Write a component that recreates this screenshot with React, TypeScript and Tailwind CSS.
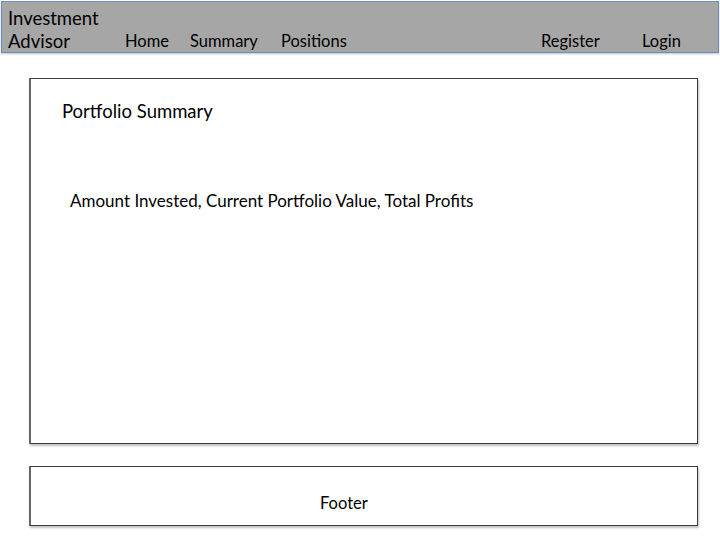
export default function App() {
  const font = { fontFamily: "Lato, 'Open Sans', sans-serif" };
  return (
    <div className="w-[720px] h-[540px] bg-white text-black relative" style={font}>
      <div className="mx-px mt-px h-[52px] bg-[#a6a6a6] border border-[#6c8ebf] flex items-end shadow-[0_1px_2px_rgba(0,0,0,0.25)]">
        <div className="pl-[6px] w-[123px] text-[18.5px] leading-[23px] mb-[-1px]">
          Investment
          <br />
          Advisor
        </div>
        <nav className="flex flex-1 text-[16.5px] leading-[23px] mb-[-1px]">
          <span className="w-[65px]">Home</span>
          <span className="w-[91px]">Summary</span>
          <span>Positions</span>
          <span className="ml-auto w-[101px]">Register</span>
          <span className="w-[76px]">Login</span>
        </nav>
      </div>
      <div className="pl-[29px] pr-[22px] pt-[25px] flex flex-col gap-[22px]">
        <div className="h-[366px] border border-[#3a3a3a] border-l-2 border-l-[#666] shadow-[1px_2px_2px_rgba(0,0,0,0.25)] pl-[31px] pt-[20px]">
          <div className="text-[18.5px] leading-[24px]">Portfolio Summary</div>
          <div className="pl-[8px] mt-[67px] text-[17px] leading-[22px]">
            Amount Invested, Current Portfolio Value, Total Profits
          </div>
        </div>
        <div className="h-[60px] border border-[#3a3a3a] border-l-2 border-l-[#666] shadow-[1px_2px_2px_rgba(0,0,0,0.25)] flex items-center pl-[289px] pt-[14px]">
          <span className="text-[16.5px]">Footer</span>
        </div>
      </div>
    </div>
  );
}
